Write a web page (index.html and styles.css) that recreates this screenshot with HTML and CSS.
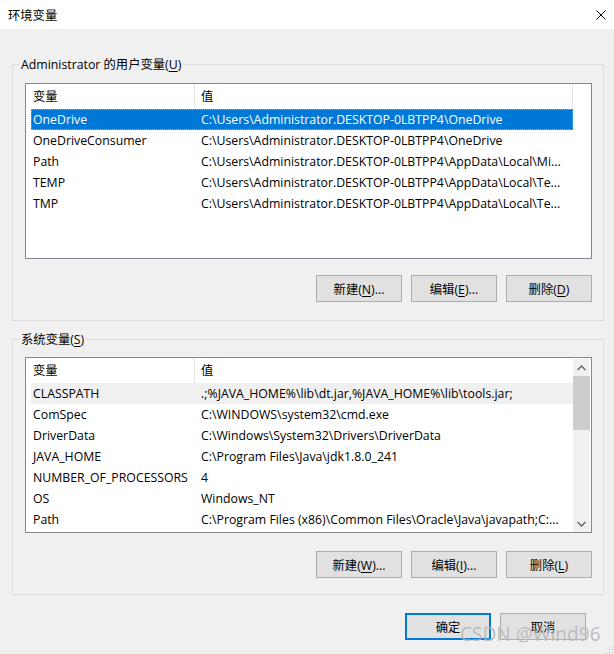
FILE: index.html
```html
<!DOCTYPE html>
<html lang="zh-CN">
<head>
    <meta charset="UTF-8">
    <title>环境变量</title>
    <link rel="stylesheet" href="styles.css">
</head>
<body>

    <!-- Title bar -->
    <div class="titlebar">
        <span class="title">环境变量</span>
        <svg class="close" width="10" height="10" viewBox="0 0 10 10">
            <path d="M0.5 0.5 L9.5 9.5 M9.5 0.5 L0.5 9.5" stroke="#000" stroke-width="1" fill="none"/>
        </svg>
    </div>

    <div class="dialog">

        <!-- User variables -->
        <fieldset class="group group-user">
            <legend>Administrator 的用户变量(<u>U</u>)</legend>
            <div class="list">
                <div class="list-main">
                    <div class="list-head">
                        <div class="head-name">变量</div>
                        <div class="head-value">值</div>
                    </div>
                    <div class="row selected"><span>OneDrive</span><span>C:\Users\Administrator.DESKTOP-0LBTPP4\OneDrive</span></div>
                    <div class="row"><span>OneDriveConsumer</span><span>C:\Users\Administrator.DESKTOP-0LBTPP4\OneDrive</span></div>
                    <div class="row"><span>Path</span><span>C:\Users\Administrator.DESKTOP-0LBTPP4\AppData\Local\Mi...</span></div>
                    <div class="row"><span>TEMP</span><span>C:\Users\Administrator.DESKTOP-0LBTPP4\AppData\Local\Te...</span></div>
                    <div class="row"><span>TMP</span><span>C:\Users\Administrator.DESKTOP-0LBTPP4\AppData\Local\Te...</span></div>
                </div>
            </div>
            <div class="buttons">
                <button>新建(<u>N</u>)...</button>
                <button>编辑(<u>E</u>)...</button>
                <button>删除(<u>D</u>)</button>
            </div>
        </fieldset>

        <!-- System variables -->
        <fieldset class="group group-sys">
            <legend>系统变量(<u>S</u>)</legend>
            <div class="list">
                <div class="list-main">
                    <div class="list-head">
                        <div class="head-name">变量</div>
                        <div class="head-value no-edge">值</div>
                    </div>
                    <div class="row hover"><span>CLASSPATH</span><span>.;%JAVA_HOME%\lib\dt.jar,%JAVA_HOME%\lib\tools.jar;</span></div>
                    <div class="row"><span>ComSpec</span><span>C:\WINDOWS\system32\cmd.exe</span></div>
                    <div class="row"><span>DriverData</span><span>C:\Windows\System32\Drivers\DriverData</span></div>
                    <div class="row"><span>JAVA_HOME</span><span>C:\Program Files\Java\jdk1.8.0_241</span></div>
                    <div class="row"><span>NUMBER_OF_PROCESSORS</span><span>4</span></div>
                    <div class="row"><span>OS</span><span>Windows_NT</span></div>
                    <div class="row"><span>Path</span><span>C:\Program Files (x86)\Common Files\Oracle\Java\javapath;C:...</span></div>
                </div>
                <div class="scrollbar">
                    <div class="arrow">
                        <svg width="9" height="6" viewBox="0 0 9 6"><path d="M0.5 5 L4.5 1 L8.5 5" stroke="#606060" stroke-width="1.3" fill="none"/></svg>
                    </div>
                    <div class="track"><div class="thumb"></div></div>
                    <div class="arrow">
                        <svg width="9" height="6" viewBox="0 0 9 6"><path d="M0.5 1 L4.5 5 L8.5 1" stroke="#606060" stroke-width="1.3" fill="none"/></svg>
                    </div>
                </div>
            </div>
            <div class="buttons">
                <button>新建(<u>W</u>)...</button>
                <button>编辑(<u>I</u>)...</button>
                <button>删除(<u>L</u>)</button>
            </div>
        </fieldset>

        <div class="footer">
            <button class="default">确定</button>
            <button>取消</button>
        </div>
    </div>

    <div class="watermark">CSDN @Wind96</div>

    <svg class="grip" width="10" height="10" viewBox="0 0 10 10">
        <rect x="8" y="2" width="1" height="1" fill="#bcbcbc"/>
        <rect x="5" y="5" width="1" height="1" fill="#bcbcbc"/>
        <rect x="8" y="5" width="1" height="1" fill="#bcbcbc"/>
        <rect x="2" y="8" width="1" height="1" fill="#bcbcbc"/>
        <rect x="5" y="8" width="1" height="1" fill="#bcbcbc"/>
        <rect x="8" y="8" width="1" height="1" fill="#bcbcbc"/>
    </svg>

</body>
</html>
```

FILE: styles.css
```css
body {
    font-family: 'Open Sans', 'Noto Sans CJK SC', sans-serif;
    font-size: 12.3px;
    color: #000;
    background-color: #f0f0f0;
    margin: 0;
    padding: 0;
    width: 614px;
    height: 654px;
    position: relative;
    overflow: hidden;
}
u {
    text-decoration-thickness: 1px;
    text-underline-offset: 2px;
}
.titlebar {
    height: 29px;
    background-color: #fff;
    display: flex;
    align-items: center;
    justify-content: space-between;
    padding: 0 8px;
}
.title {
    font-size: 12.3px;
}
.dialog {
    padding: 27px 0 0 12px;
}
.group {
    width: 567px;
    margin: 0;
    padding: 10px 11px 18px 12px;
    border: 1px solid #dcdcdc;
}
.group legend {
    margin-left: -6px;
    padding: 0 2px;
    line-height: 17px;
}
.group-sys {
    margin-top: 10px;
    padding-top: 9px;
    padding-bottom: 16px;
}
.list {
    height: 174px;
    background-color: #fff;
    border: 1px solid #828790;
    display: flex;
    overflow: hidden;
}
.list-main {
    width: 547px;
}
.list-head {
    display: flex;
    height: 25px;
    line-height: 25px;
}
.head-name {
    width: 161px;
    padding-left: 7px;
    border-right: 1px solid #e5e5e5;
}
.head-value {
    width: 371px;
    padding-left: 6px;
    border-right: 1px solid #e5e5e5;
}
.head-value.no-edge {
    border-right: none;
}
.row {
    display: grid;
    grid-template-columns: 168px 1fr;
    height: 21px;
    line-height: 21px;
    width: 542px;
    margin-left: 5px;
    white-space: nowrap;
}
.row span {
    padding-left: 2px;
    overflow: hidden;
}
.row.selected {
    background-color: #0078d7;
    color: #fff;
    outline: 1px dotted rgba(255, 170, 80, 0.8);
    outline-offset: -1px;
}
.row.hover {
    background-color: #f0f0f0;
}
.scrollbar {
    width: 17px;
    margin: 1px 1px 0 auto;
    background-color: #f0f0f0;
    display: flex;
    flex-direction: column;
}
.arrow {
    height: 17px;
    display: flex;
    align-items: center;
    justify-content: center;
}
.track {
    flex: 1;
}
.thumb {
    height: 54px;
    background-color: #cdcdcd;
}
.buttons {
    display: flex;
    justify-content: flex-end;
    gap: 9px;
    margin-top: 16px;
}
.group-sys .buttons {
    margin-top: 18px;
}
button {
    font-family: inherit;
    font-size: 12.3px;
    color: #000;
    width: 86px;
    height: 27px;
    padding: 0;
    background-color: #e1e1e1;
    border: 1px solid #adadad;
    border-radius: 0;
}
.footer {
    display: flex;
    gap: 9px;
    margin-top: 18px;
    padding-left: 393px;
}
button.default {
    border: 2px solid #0078d7;
}
.watermark {
    position: absolute;
    left: 460px;
    top: 621px;
    font-family: 'Noto Sans', sans-serif;
    font-size: 19px;
    color: rgba(140, 140, 140, 0.55);
    text-shadow: 0 0 1px rgba(255, 255, 255, 0.6);
}
.grip {
    position: absolute;
    right: 0;
    bottom: 0;
}
```
